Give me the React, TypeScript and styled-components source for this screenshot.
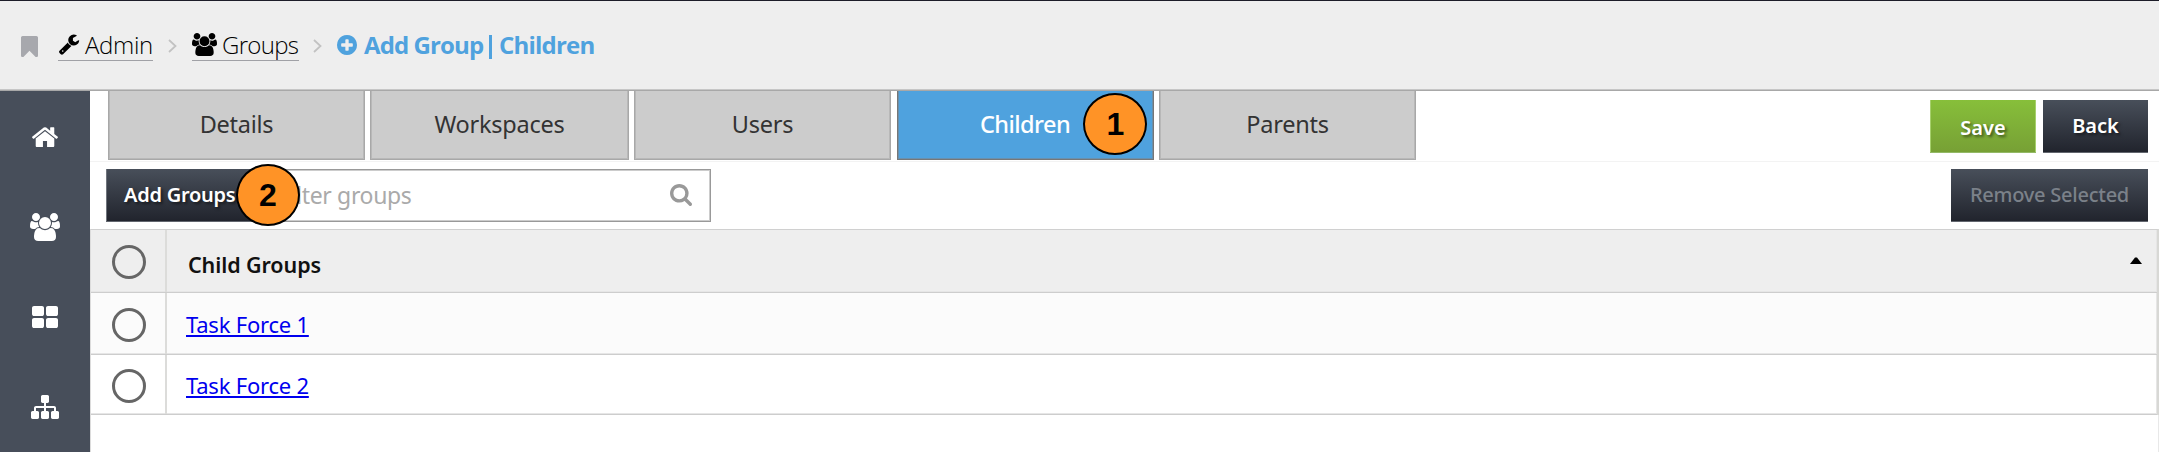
import React from "react";
import styled, { createGlobalStyle, css } from "styled-components";

const GlobalStyle = createGlobalStyle`
  * { box-sizing: border-box; }
  body {
    margin: 0;
    background: #fff;
    overflow: hidden;
    font-family: "Noto Sans", "Open Sans", sans-serif;
  }
`;

const icons = {
  bookmark: {
    box: "0 128 1280 1500",
    d: "M1164 128q23 0 44 9 33 13 52.5 41t19.5 62v1289q0 34-19.5 62t-52.5 41q-19 8-44 8-48 0-83-32l-441-424-441 424q-36 33-83 33-23 0-44-9-33-13-52.5-41t-19.5-62v-1289q0-34 19.5-62t52.5-41q21-9 44-9h1048z",
  },
  wrench: {
    box: "0 0 1792 1792",
    d: "M448 1472q0-26-19-45t-45-19-45 19-19 45 19 45 45 19 45-19 19-45zm644-420l-682 682q-37 37-90 37-52 0-91-37l-106-108q-38-36-38-90 0-53 38-91l681-681q39 98 114.500 173.500t173.500 114.500zm634-435q0 39-23 106-47 134-164.500 217.500t-258.500 83.500q-185 0-316.500-131.500t-131.500-316.500 131.500-316.500 316.500-131.500q58 0 121.500 16.500t107.500 46.500q16 11 16 28t-16 28l-293 169v224l193 107q5-3 79-48.500t135.500-81 70.500-35.500q15 0 23.500 10t8.500 25z",
  },
  users: {
    box: "0 0 1920 1792",
    d: "M593 896q-162 5-265 128h-134q-82 0-138-40.500t-56-118.500q0-353 124-353 6 0 43.500 21t97.500 42.500 119 21.500q67 0 133-23-5 37-5 66 0 139 81 256zm1071 637q0 120-73 189.500t-194 69.500h-874q-121 0-194-69.500t-73-189.500q0-53 3.500-103.500t14-109 26.500-108.500 43-97.500 62-81 85.500-53.500 111.500-20q10 0 43 21.500t73 48 107 48 135 21.500 135-21.500 107-48 73-48 43-21.500q61 0 111.500 20t85.500 53.500 62 81 43 97.500 26.500 108.500 14 109 3.500 103.500zm-1024-1277q0 106-75 181t-181 75-181-75-75-181 75-181 181-75 181 75 75 181zm704 384q0 159-112.500 271.500t-271.500 112.500-271.500-112.500-112.500-271.500 112.500-271.500 271.500-112.500 271.500 112.500 112.500 271.500zm576 225q0 78-56 118.500t-138 40.500h-134q-103-123-265-128 81-117 81-256 0-29-5-66 66 23 133 23 59 0 119-21.500t97.500-42.500 43.500-21q124 0 124 353zm-128-609q0 106-75 181t-181 75-181-75-75-181 75-181 181-75 181 75 75 181z",
  },
  plusCircle: {
    box: "128 128 1536 1536",
    d: "M1344 960v-128q0-26-19-45t-45-19h-256v-256q0-26-19-45t-45-19h-128q-26 0-45 19t-19 45v256h-256q-26 0-45 19t-19 45v128q0 26 19 45t45 19h256v256q0 26 19 45t45 19h128q26 0 45-19t19-45v-256h256q26 0 45-19t19-45zm320-64q0 209-103 385.500t-279.500 279.500-385.500 103-385.500-103-279.500-279.500-103-385.500 103-385.500 279.500-279.500 385.500-103 385.500 103 279.500 279.500 103 385.500z",
  },
  home: {
    box: "89 240 1614 1296",
    d: "M1472 992v480q0 26-19 45t-45 19h-384v-384h-256v384h-384q-26 0-45-19t-19-45v-480q0-1 .5-3t.5-3l575-474 575 474q1 2 1 6zm223-69l-62 74q-8 9-21 11h-3q-13 0-21-7l-692-577-692 577q-12 8-24 7-13-2-21-11l-62-74q-8-10-7-23.500t11-21.500l719-599q32-26 76-26t76 26l244 204v-195q0-14 9-23t23-9h192q14 0 23 9t9 23v408l219 182q10 8 11 21.500t-7 23.500z",
  },
  thLarge: {
    box: "64 128 1664 1408",
    d: "M832 1024v384q0 52-38 90t-90 38h-512q-52 0-90-38t-38-90v-384q0-52 38-90t90-38h512q52 0 90 38t38 90zm0-768v384q0 52-38 90t-90 38h-512q-52 0-90-38t-38-90v-384q0-52 38-90t90-38h512q52 0 90 38t38 90zm896 768v384q0 52-38 90t-90 38h-512q-52 0-90-38t-38-90v-384q0-52 38-90t90-38h512q52 0 90 38t38 90zm0-768v384q0 52-38 90t-90 38h-512q-52 0-90-38t-38-90v-384q0-52 38-90t90-38h512q52 0 90 38t38 90z",
  },
  sitemap: {
    box: "0 128 1792 1536",
    d: "M1792 1248v320q0 40-28 68t-68 28h-320q-40 0-68-28t-28-68v-320q0-40 28-68t68-28h96v-192h-512v192h96q40 0 68 28t28 68v320q0 40-28 68t-68 28h-320q-40 0-68-28t-28-68v-320q0-40 28-68t68-28h96v-192h-512v192h96q40 0 68 28t28 68v320q0 40-28 68t-68 28h-320q-40 0-68-28t-28-68v-320q0-40 28-68t68-28h96v-192q0-52 38-90t90-38h512v-192h-96q-40 0-68-28t-28-68v-320q0-40 28-68t68-28h320q40 0 68 28t28 68v320q0 40-28 68t-68 28h-96v192h512q52 0 90 38t38 90v192h96q40 0 68 28t28 68z",
  },
  search: {
    box: "64 128 1664 1664",
    d: "M1216 832q0-185-131.500-316.500t-316.500-131.500-316.500 131.500-131.500 316.500 131.500 316.500 316.500 131.500 316.500-131.500 131.500-316.500zm512 832q0 52-38 90t-90 38q-54 0-90-38l-343-342q-179 124-399 124-143 0-273.500-55.500t-225-150-150-225-55.500-273.500 55.500-273.500 150-225 225-150 273.500-55.500 273.500 55.500 225 150 150 225 55.500 273.500q0 220-124 399l343 343q37 37 37 90z",
  },
};

const Glyph = styled.svg<{ $w: number; $h: number }>`
  display: block;
  flex: none;
  width: ${(p) => p.$w}px;
  height: ${(p) => p.$h}px;
  fill: currentColor;
`;

const Icon = ({ name, w, h }: { name: keyof typeof icons; w: number; h: number }) => (
  <Glyph $w={w} $h={h} viewBox={icons[name].box} preserveAspectRatio="none" aria-hidden>
    <path d={icons[name].d} />
  </Glyph>
);

const Page = styled.div`
  width: 2159px;
  height: 452px;
  display: flex;
  flex-direction: column;
`;

const Header = styled.header`
  flex: none;
  height: 91px;
  display: flex;
  align-items: flex-start;
  background: #eee;
  border-top: 1px solid #1c1c28;
  border-bottom: 1px solid #a8a8a8;
  box-shadow: inset 0 -1px #c6c6c6;
  padding: 27px 0 0 21px;
`;

const Bookmark = styled.span`
  width: 37px;
  padding-top: 8px;
  color: #a7a8ad;
`;

const Crumb = styled.a<{ $w: number }>`
  width: ${(p) => p.$w}px;
  height: 33px;
  display: flex;
  align-items: center;
  color: #000;
  font-family: "Open Sans", sans-serif;
  font-size: 24px;
  font-weight: 300;
  line-height: 33px;
  border-bottom: 1px solid #a0a1a6;
  white-space: nowrap;
`;

const CrumbText = styled.span<{ $gap: number; $track: number }>`
  margin-left: ${(p) => p.$gap}px;
  letter-spacing: ${(p) => p.$track}px;
`;

const Chevron = styled.svg<{ $left: number; $right: number }>`
  width: 9px;
  height: 14px;
  margin: 11px ${(p) => p.$right}px 0 ${(p) => p.$left}px;
  fill: none;
  stroke: #c2c2c2;
  stroke-width: 1.8;
`;

const Current = styled.div`
  height: 33px;
  display: flex;
  align-items: center;
  color: #4fa2de;
  font-family: "Open Sans", sans-serif;
  font-size: 24px;
  font-weight: 700;
  line-height: 33px;
  white-space: nowrap;
`;

const GroupTitle = styled.span`
  width: 132px;
  padding-left: 7px;
  letter-spacing: -0.9px;
`;

const Divider = styled.span`
  width: 3px;
  height: 24px;
  margin: 5px 7px 0 0;
  background: #4fa2de;
`;

const PageTitle = styled.span`
  letter-spacing: -0.8px;
`;

const Body = styled.div`
  flex: 1;
  min-height: 0;
  display: flex;
`;

const Sidebar = styled.nav`
  flex: none;
  width: 90px;
  background: #474e5a;
  color: #fff;
  display: flex;
  flex-direction: column;
  align-items: center;
  padding-top: 1px;
`;

const NavItem = styled.a`
  flex: none;
  height: 90px;
  display: flex;
  align-items: center;
`;

const Main = styled.main`
  flex: 1;
  min-width: 0;
  display: flex;
  flex-direction: column;
`;

const TabBar = styled.div`
  flex: none;
  height: 71px;
  display: flex;
  justify-content: space-between;
  align-items: flex-start;
  padding: 0 11px 0 18px;
  border-bottom: 1px solid #f3f3f3;
`;

const Tabs = styled.div`
  display: grid;
  grid-template-columns: 257px 259px 258px 257px 257px;
  gap: 5px;
`;

const Tab = styled.div<{ $active?: boolean }>`
  height: 69px;
  display: flex;
  position: relative;
  align-items: center;
  justify-content: center;
  padding-bottom: 3px;
  font-size: 23.5px;
  letter-spacing: -0.25px;
  color: #333;
  background: #ccc;
  border: solid #a8a8a8;
  border-width: 0 1px 1px;
  box-shadow: inset 1px 0 #b8b8b8, inset -1px -1px #b8b8b8;

  &:nth-child(3) {
    margin-right: 1px;
  }

  ${(p) =>
    p.$active &&
    css`
      color: #fff;
      font-weight: 550;
      letter-spacing: -0.55px;
      padding-right: 1px;
      background: #4fa2de;
      border-color: #777;
      box-shadow: inset 1px 0 #6a90ad, inset -1px -1px #6a90ad;
    `}
`;

const Marker = styled.span<{ $x: number; $y: number }>`
  position: absolute;
  z-index: 2;
  left: ${(p) => p.$x}px;
  top: ${(p) => p.$y}px;
  width: 64px;
  height: 62px;
  display: flex;
  align-items: center;
  justify-content: center;
  border: 2px solid #000;
  border-radius: 50%;
  background: #ff9326;
  color: #000;
  font: 700 32px "Liberation Sans", Arial, sans-serif;
`;

const Actions = styled.div`
  display: flex;
  gap: 7px;
  padding-top: 9px;
`;

const Button = styled.button<{ $w: number; $green?: boolean; $off?: boolean }>`
  position: relative;
  width: ${(p) => p.$w}px;
  height: 53px;
  padding: ${(p) => (p.$green ? "3px 0 0" : "0 0 1px")};
  border: 0;
  border-bottom: 1px solid ${(p) => (p.$green ? "#93b966" : "#62666e")};
  background: ${(p) =>
    p.$green ? "linear-gradient(#87bf3a, #77a035)" : "linear-gradient(#484f5a, #21242d)"};
  box-shadow: ${(p) => (p.$green ? "inset 1px 0 #a6d06c, inset -1px 0 #a6d06c" : "none")};
  color: ${(p) => (p.$off ? "#7b8189" : "#fff")};
  text-shadow: ${(p) => (p.$off ? "none" : "2px 2px 3px rgba(0,0,0,.5)")};
  font-family: "Noto Sans", "Open Sans", sans-serif;
  font-size: 20px;
  font-weight: ${(p) => (p.$off ? 550 : 600)};
  letter-spacing: ${(p) => (p.$off ? -0.25 : 0)}px;
  white-space: nowrap;
`;

const Toolbar = styled.div`
  flex: none;
  height: 67px;
  display: flex;
  justify-content: space-between;
  padding: 7px 11px 0 16px;
`;

const FilterGroup = styled.div`
  position: relative;
  display: flex;
`;

const AddButton = styled(Button)`
  text-align: left;
  padding-left: 18px;
  letter-spacing: -0.25px;
  box-shadow: inset 1px 0 #6f747c;
`;

const Filter = styled.label`
  width: 458px;
  height: 53px;
  display: flex;
  align-items: center;
  justify-content: space-between;
  border: 1px solid #999;
  border-left: 0;
  box-shadow: inset 0 1px #ccc, inset -1px -1px #ccc;
  padding: 0 18px 1px 26px;
  font-size: 23px;
  letter-spacing: -0.35px;
  color: #aaa;
`;

const FilterIcon = styled.span`
  color: #999;
`;

const Table = styled.div`
  flex: none;
  border-top: 1px solid #d0d0d0;
  border-left: 1px solid #dcdcdc;
  border-right: 2px solid #d8d8d5;
`;

const Row = styled.div<{ $h: number; $bg: string }>`
  height: ${(p) => p.$h}px;
  display: flex;
  background: ${(p) => p.$bg};
  border-bottom: 1px solid #cdcdcd;
  box-shadow: inset 0 -1px #e6e6e6, inset -1px 0 #e6e6e6;
`;

const SelectCell = styled.div`
  width: 76px;
  display: flex;
  align-items: center;
  justify-content: center;
  border-right: 2px solid #dcdcda;
`;

const Radio = styled.span<{ $drop?: number }>`
  width: 34px;
  height: 34px;
  border: 3px solid #666;
  border-radius: 50%;
  margin: ${(p) => p.$drop ?? 3}px 0 0 1px;
`;

const NameCell = styled.div`
  flex: 1;
  display: flex;
  align-items: center;
  justify-content: space-between;
  padding: 0 15px 0 19px;
  font-size: 22px;
`;

const HeadText = styled.span`
  color: #111;
  font-size: 21.5px;
  font-weight: 600;
  letter-spacing: -0.1px;
  padding: 7px 0 0 2px;
`;

const SortArrow = styled.svg`
  width: 12px;
  height: 7px;
  margin-bottom: 2px;
  fill: #000;
`;

const GroupLink = styled.a`
  color: #0000ee;
  text-decoration: underline;
  letter-spacing: -0.22px;
`;

const Remainder = styled.div`
  flex: 1;
  border-left: 1px solid #dcdcdc;
  border-right: 1px solid #e8e8e8;
`;

const App = () => (
  <>
    <GlobalStyle />
    <Page>
      <Header>
        <Bookmark><Icon name="bookmark" w={17} h={21} /></Bookmark>
        <Crumb $w={95}>
          <Icon name="wrench" w={22} h={22} />
          <CrumbText $gap={5} $track={-0.3}>Admin</CrumbText>
        </Crumb>
        <Chevron $left={15} $right={15} viewBox="0 0 9 14"><path d="M1 1l6.500 6L1 13" /></Chevron>
        <Crumb $w={107}>
          <Icon name="users" w={25} h={23} />
          <CrumbText $gap={5} $track={-0.7}>Groups</CrumbText>
        </Crumb>
        <Chevron $left={14} $right={15} viewBox="0 0 9 14"><path d="M1 1l6.500 6L1 13" /></Chevron>
        <Current>
          <Icon name="plusCircle" w={20} h={20} />
          <GroupTitle>Add Group</GroupTitle>
          <Divider />
          <PageTitle>Children</PageTitle>
        </Current>
      </Header>
      <Body>
        <Sidebar>
          <NavItem><Icon name="home" w={26} h={20} /></NavItem>
          <NavItem><Icon name="users" w={30} h={28} /></NavItem>
          <NavItem><Icon name="thLarge" w={26} h={22} /></NavItem>
          <NavItem><Icon name="sitemap" w={28} h={24} /></NavItem>
        </Sidebar>
        <Main>
          <TabBar>
            <Tabs>
              <Tab>Details</Tab>
              <Tab>Workspaces</Tab>
              <Tab>Users</Tab>
              <Tab $active>Children<Marker $x={185} $y={2}>1</Marker></Tab>
              <Tab>Parents</Tab>
            </Tabs>
            <Actions>
              <Button $w={106} $green>Save</Button>
              <Button $w={105}>Back</Button>
            </Actions>
          </TabBar>
          <Toolbar>
            <FilterGroup>
              <AddButton $w={147}>Add Groups</AddButton>
              <Filter>
                <span>Filter groups</span>
                <FilterIcon><Icon name="search" w={22} h={22} /></FilterIcon>
              </Filter>
              <Marker $x={130} $y={-5}>2</Marker>
            </FilterGroup>
            <Button $w={197} $off>Remove Selected</Button>
          </Toolbar>
          <Table>
            <Row $h={63} $bg="#eee">
              <SelectCell><Radio $drop={1} /></SelectCell>
              <NameCell>
                <HeadText>Child Groups</HeadText>
                <SortArrow viewBox="0 0 12 7"><path d="M0 7L5 .5h2L12 7z" /></SortArrow>
              </NameCell>
            </Row>
            <Row $h={62} $bg="#fbfbfb">
              <SelectCell><Radio /></SelectCell>
              <NameCell><GroupLink>Task Force 1</GroupLink></NameCell>
            </Row>
            <Row $h={60} $bg="#fff">
              <SelectCell><Radio /></SelectCell>
              <NameCell><GroupLink>Task Force 2</GroupLink></NameCell>
            </Row>
          </Table>
          <Remainder />
        </Main>
      </Body>
    </Page>
  </>
);

export default App;
